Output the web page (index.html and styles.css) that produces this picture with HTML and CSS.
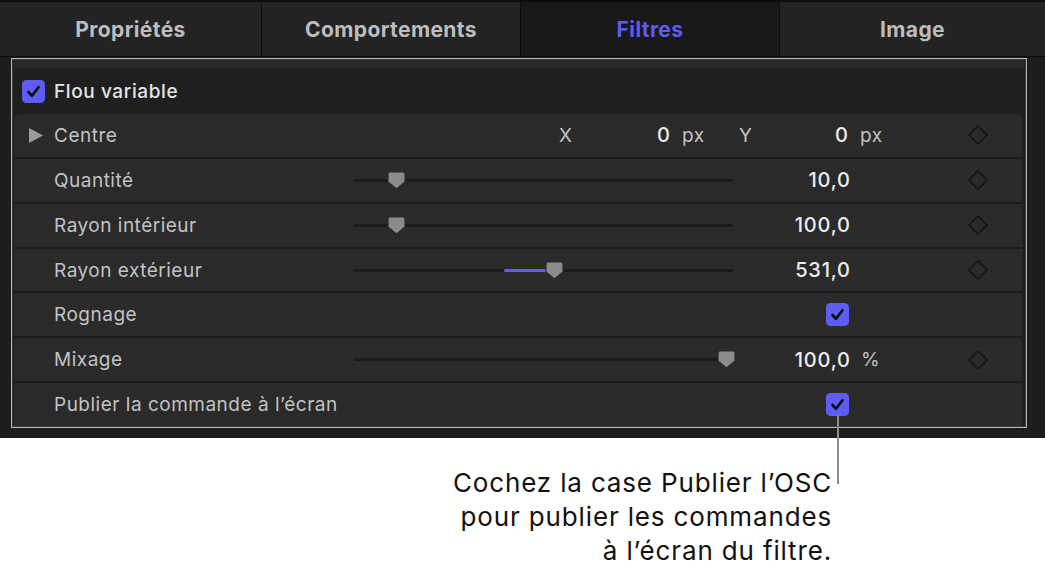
FILE: index.html
```html
<!DOCTYPE html>
<html lang="fr">
<head>
<meta charset="utf-8">
<title>Filtres - Flou variable</title>
<link rel="stylesheet" href="styles.css">
</head>
<body>
<div class="app">
  <nav class="tabs">
    <div class="tab">Propriétés</div>
    <div class="tab">Comportements</div>
    <div class="tab active">Filtres</div>
    <div class="tab">Image</div>
  </nav>
  <div class="panel">
    <div class="frame">
      <div class="band"></div>
      <div class="header">
        <span class="check"><svg viewBox="0 0 23 23" width="23" height="23"><rect x="0" y="0" width="23" height="23" rx="4.5" fill="#5e5cf2"/><path d="M6.5 12 L10 15.8 L16.5 7.2" fill="none" stroke="#0b0b0b" stroke-width="2.6" stroke-linecap="round" stroke-linejoin="round"/></svg></span>
        <span class="title">Flou variable</span>
      </div>
      <div class="rows">
        <div class="row row-centre">
          <div class="label"><svg class="tri" viewBox="0 0 14 15" width="14" height="15"><polygon points="0,0 14,7.5 0,15" fill="#9a9a9a"/></svg>Centre</div>
          <div></div>
          <div class="axis">X</div>
          <div class="value">0</div>
          <div class="unit">px</div>
          <div class="axis">Y</div>
          <div class="value">0</div>
          <div class="unit">px</div>
          <div class="key"><svg viewBox="0 0 20 20" width="20" height="20"><polygon points="10,1 19,10 10,19 1,10" fill="none" stroke="#141414" stroke-width="1.6"/></svg></div>
        </div>
        <div class="row">
          <div class="label">Quantité</div>
          <div class="slider"><div class="track"></div><svg class="thumb" style="left:calc(11.1% - 9.5px)" viewBox="0 0 19 19" width="19" height="19"><path d="M3 1 H16 Q18 1 18 3 V11 L9.5 18 L1 11 V3 Q1 1 3 1 Z" fill="#8b8b8b" stroke="#2a2a2a" stroke-width="1.2"/></svg></div>
          <div class="value">10,0</div>
          <div class="unit"></div>
          <div class="key"><svg viewBox="0 0 20 20" width="20" height="20"><polygon points="10,1 19,10 10,19 1,10" fill="none" stroke="#141414" stroke-width="1.6"/></svg></div>
        </div>
        <div class="row">
          <div class="label">Rayon intérieur</div>
          <div class="slider"><div class="track"></div><svg class="thumb" style="left:calc(11.1% - 9.5px)" viewBox="0 0 19 19" width="19" height="19"><path d="M3 1 H16 Q18 1 18 3 V11 L9.5 18 L1 11 V3 Q1 1 3 1 Z" fill="#8b8b8b" stroke="#2a2a2a" stroke-width="1.2"/></svg></div>
          <div class="value">100,0</div>
          <div class="unit"></div>
          <div class="key"><svg viewBox="0 0 20 20" width="20" height="20"><polygon points="10,1 19,10 10,19 1,10" fill="none" stroke="#141414" stroke-width="1.6"/></svg></div>
        </div>
        <div class="row">
          <div class="label">Rayon extérieur</div>
          <div class="slider"><div class="track"></div><div class="fill" style="left:39.6%;width:11.8%"></div><svg class="thumb" style="left:calc(53% - 9.5px)" viewBox="0 0 19 19" width="19" height="19"><path d="M3 1 H16 Q18 1 18 3 V11 L9.5 18 L1 11 V3 Q1 1 3 1 Z" fill="#8b8b8b" stroke="#2a2a2a" stroke-width="1.2"/></svg></div>
          <div class="value">531,0</div>
          <div class="unit"></div>
          <div class="key"><svg viewBox="0 0 20 20" width="20" height="20"><polygon points="10,1 19,10 10,19 1,10" fill="none" stroke="#141414" stroke-width="1.6"/></svg></div>
        </div>
        <div class="row">
          <div class="label">Rognage</div>
          <div></div>
          <div class="value"><span class="check"><svg viewBox="0 0 23 23" width="23" height="23"><rect x="0" y="0" width="23" height="23" rx="4.5" fill="#5e5cf2"/><path d="M6.5 12 L10 15.8 L16.5 7.2" fill="none" stroke="#0b0b0b" stroke-width="2.6" stroke-linecap="round" stroke-linejoin="round"/></svg></span></div>
          <div class="unit"></div>
          <div class="key"></div>
        </div>
        <div class="row">
          <div class="label">Mixage</div>
          <div class="slider"><div class="track"></div><svg class="thumb" style="left:calc(98.4% - 9.5px)" viewBox="0 0 19 19" width="19" height="19"><path d="M3 1 H16 Q18 1 18 3 V11 L9.5 18 L1 11 V3 Q1 1 3 1 Z" fill="#8b8b8b" stroke="#2a2a2a" stroke-width="1.2"/></svg></div>
          <div class="value">100,0</div>
          <div class="unit">%</div>
          <div class="key"><svg viewBox="0 0 20 20" width="20" height="20"><polygon points="10,1 19,10 10,19 1,10" fill="none" stroke="#141414" stroke-width="1.6"/></svg></div>
        </div>
        <div class="row">
          <div class="label">Publier la commande à l’écran</div>
          <div></div>
          <div class="value"><span class="check"><svg viewBox="0 0 23 23" width="23" height="23"><rect x="0" y="0" width="23" height="23" rx="4.5" fill="#5e5cf2"/><path d="M6.5 12 L10 15.8 L16.5 7.2" fill="none" stroke="#0b0b0b" stroke-width="2.6" stroke-linecap="round" stroke-linejoin="round"/></svg></span></div>
          <div class="unit"></div>
          <div class="key"></div>
        </div>
      </div>
    </div>
  </div>
</div>
<div class="leader"></div>
<p class="callout">Cochez la case Publier l’OSC<br>pour publier les commandes<br>à l’écran du filtre.</p>
</body>
</html>
```
FILE: styles.css
```css
html, body {
  margin: 0;
  padding: 0;
  background: #ffffff;
}
body {
  font-family: Inter, "Liberation Sans", sans-serif;
  position: relative;
  width: 1045px;
  height: 569px;
  overflow: hidden;
}
.app {
  height: 438px;
  background: #1d1d1d;
  display: flex;
  flex-direction: column;
}
.tabs {
  display: grid;
  grid-template-columns: 262px 259px 259px 1fr;
  height: 54px;
  border-top: 2px solid #0c0c0c;
  border-bottom: 1px solid #0c0c0c;
  background: #232323;
}
.tab {
  display: flex;
  align-items: center;
  justify-content: center;
  font-size: 21px;
  font-weight: 700;
  letter-spacing: 0.4px;
  color: #bdbdbd;
  border-right: 1px solid #0c0c0c;
  padding-top: 1px;
}
.tab:last-child {
  border-right: none;
}
.tab.active {
  background: #181818;
  color: #5d5bf3;
}
.panel {
  padding: 1px 18px 0 11px;
}
.frame {
  height: 367px;
  border: 1px solid #b5b5b5;
  box-shadow: inset 0 0 0 1px #3c3c3c;
  display: flex;
  flex-direction: column;
  padding: 0 4px 1px 2px;
  background: #1f1f1f;
}
.band {
  height: 8px;
  margin: 1px -4px 0 -2px;
  background: #282828;
}
.header {
  height: 46px;
  display: flex;
  align-items: center;
  padding-left: 8px;
  gap: 9px;
}
.check {
  display: inline-flex;
  width: 23px;
  height: 23px;
}
.title {
  font-size: 19px;
  font-weight: 500;
  letter-spacing: 0.6px;
  color: #e4e4e4;
}
.rows {
  flex: 1;
  display: flex;
  flex-direction: column;
  gap: 2px;
  background: #1c1c1c;
  border-radius: 6px 6px 0 0;
  overflow: hidden;
}
.row {
  flex: 1;
  display: grid;
  grid-template-columns: 340px 379px 117px 105px 45px;
  align-items: center;
  background: #2a2a2a;
  font-size: 19px;
  letter-spacing: 0.5px;
  color: #c2c2c2;
}
.row-centre {
  grid-template-columns: 340px 190px 28px 98px 68px 14px 96px 107px 45px;
}
.label {
  padding-left: 40px;
  display: flex;
  align-items: center;
  white-space: nowrap;
}
.row-centre .label {
  padding-left: 15px;
}
.tri {
  margin-right: 11px;
}
.axis {
  text-align: right;
  letter-spacing: 0;
}
.value {
  font-size: 20px;
  font-weight: 500;
  letter-spacing: 0.8px;
  color: #ececec;
  display: flex;
  justify-content: flex-end;
  margin-right: -0.8px;
}
.value .check {
  margin-right: 1.8px;
}
.unit {
  padding-left: 11px;
}
.row-centre .unit {
  padding-left: 12px;
}
.key {
  display: flex;
  justify-content: center;
}
.slider {
  position: relative;
  height: 19px;
  display: flex;
  align-items: center;
}
.track {
  width: 100%;
  height: 3px;
  border-radius: 2px;
  background: #1b1b1b;
}
.fill {
  position: absolute;
  top: 8px;
  height: 3px;
  border-radius: 2px;
  background: #5d5bf3;
}
.thumb {
  position: absolute;
  top: 0;
}
.leader {
  position: absolute;
  left: 837px;
  top: 415px;
  width: 2px;
  height: 69px;
  background: #8c8c8c;
}
.callout {
  margin: 28px 213px 0 0;
  text-align: right;
  font-size: 26px;
  letter-spacing: 0.85px;
  line-height: 34px;
  color: #111111;
}
```
